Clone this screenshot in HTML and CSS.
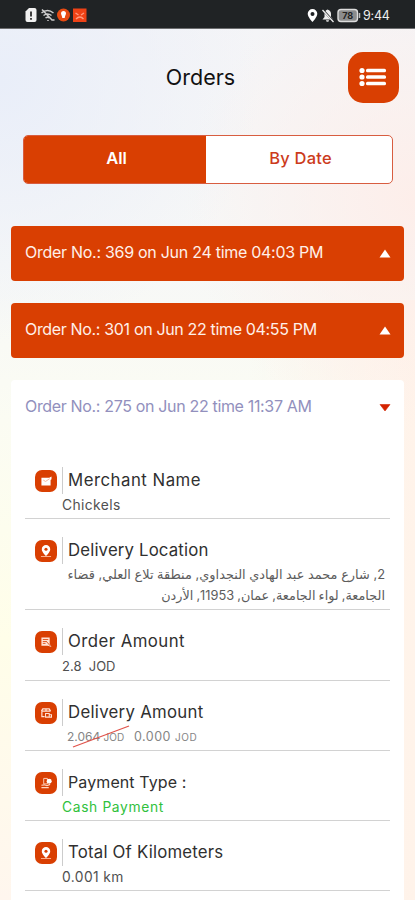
FILE: index.html
```html
<!DOCTYPE html>
<html lang="en">
<head>
<meta charset="utf-8">
<title>Orders</title>
<link rel="stylesheet" href="styles.css">
</head>
<body>
<svg class="defs" aria-hidden="true">
  <symbol id="pin" viewBox="0 0 24 24"><path d="M12 5.500a4.600 4.600 0 0 0-4.600 4.600c0 3.200 4.600 7.400 4.600 7.400s4.600-4.200 4.600-7.400A4.600 4.600 0 0 0 12 5.500z" fill="#fff"/><circle cx="12" cy="10.100" r="1.700" fill="#d93f02"/><path d="M6.500 18h11" stroke="#ffb999" stroke-width="1"/></symbol>
  <symbol id="store" viewBox="0 0 24 24"><path d="M7 8.500h8.500l2.500-1.500v3l-1 1v6H7z" fill="#fff"/><path d="M9 11l2.500 1.500L16 9.500" stroke="#f5b297" fill="none"/></symbol>
  <symbol id="bill" viewBox="0 0 24 24"><path d="M7 7h9v7l2 3.500-4-1.500H7z" fill="#ffe4d8"/><path d="M8.500 9.300h6M8.500 11.500h4M8.500 13.500h3M12 11l5 5.500" stroke="#d93f02" stroke-width=".9"/></symbol>
  <symbol id="parcel" viewBox="0 0 24 24"><path d="M7 10l1.500-2.500h7L17 10M7 10h10M7.500 10v6h3M12 7.500V10" fill="none" stroke="#ffe4d8" stroke-width="1.300"/><path d="M11.500 12.500h4v4h-4zM15.500 14h2.500v2.500h-2.500" fill="none" stroke="#ffe4d8" stroke-width="1.100"/></symbol>
  <symbol id="pay" viewBox="0 0 24 24"><path d="M9.500 7h4v6h-4z" fill="none" stroke="#ffd5c2"/><circle cx="15.500" cy="10" r="2.700" fill="#fff"/><path d="M7 14.500l3-.5 3 1 3.500-1.500M7 17h8" fill="none" stroke="#ffd5c2" stroke-width="1.200"/></symbol>
</svg>
<header class="status">
  <svg class="status-left" viewBox="0 0 64 16">
    <path d="M4 1h5.500a2 2 0 0 1 2 2v10a2 2 0 0 1-2 2H2.500a2 2 0 0 1-2-2V4.500z" fill="#f1f1f1"/><path d="M6 4.500v5M6 11v1.700" stroke="#222" stroke-width="1.700"/>
    <g fill="none" stroke="#ccc" stroke-width="1.500"><path d="M16.500 6q6-5 12 0M18.500 8.500q4-3.200 8 0M20.500 11q2-1.500 4 0M17 2.500l10 10.500M23 13v1M26.500 13h3"/></g>
    <circle cx="38.500" cy="8" r="6.500" fill="#e84b12"/><path d="M38.500 4a2.500 2.500 0 0 0-2.500 2.500c0 1.200 1 2 1.300 4.500h2.400c.3-2.500 1.300-3.300 1.300-4.500A2.500 2.500 0 0 0 38.500 4z" fill="#fff"/>
    <path d="M48 1.500h13.500v13.500H48z" fill="#ee4216"/><path d="M50.500 6l3 2M59 6l-3 2M51 12q4-4 7.500 0" fill="none" stroke="#ff9b80" stroke-width="1.300"/>
  </svg>
  <div class="status-right">
    <svg class="status-icons" viewBox="0 0 56 16">
      <path fill-rule="evenodd" d="M5.500 2A4.800 4.800 0 0 0 .7 6.800C.7 10.200 5.500 15 5.500 15s4.800-4.800 4.800-8.200A4.800 4.800 0 0 0 5.500 2zm0 2.900a2 2 0 1 1 0 4 2 2 0 0 1 0-4z" fill="#fff"/>
      <path d="M20.500 2.500c2.500.5 3.500 2.500 3.500 4.500v3l2 2.500H15.500l2-2.500V7c0-2 1-4 3-4.500zM19 13.200h3a1.500 1.500 0 0 1-3 0z" fill="#eee"/><path d="M15 2l12 13" stroke="#202325" stroke-width="2"/><path d="M15.500 3l11 12" stroke="#eee" stroke-width="1.300"/>
      <rect x="31" y="2.500" width="19.500" height="12" rx="3" fill="#8b8c8d" stroke="#ddd" stroke-width="1.400"/><path d="M52.500 6v5" stroke="#bbb" stroke-width="1.500"/>
      <text x="40.700" y="12.300" text-anchor="middle" class="battery">78</text>
    </svg>
    <span class="clock">9:44</span>
  </div>
</header>
<main>
  <div class="top">
    <h1>Orders</h1>
    <button class="menu" aria-label="Menu"><svg viewBox="0 0 30 22"><g fill="#fff"><circle cx="4" cy="4.500" r="2.600"/><circle cx="4" cy="11" r="2.600"/><circle cx="4" cy="17.500" r="2.600"/><rect x="8" y="2.700" width="20" height="3.500" rx="1.500"/><rect x="8" y="9.200" width="20" height="3.500" rx="1.500"/><rect x="8" y="15.700" width="20" height="3.500" rx="1.500"/></g></svg></button>
  </div>
  <div class="tabs"><div class="tab active">All</div><div class="tab by-date">By Date</div></div>
  <div class="order"><span class="o369">Order No.: 369 on Jun 24 time 04:03 PM</span><svg class="arrow" viewBox="0 0 12 9"><path d="M6 .5L11.500 8.500H.5z" fill="#fff"/></svg></div>
  <div class="order"><span class="o301">Order No.: 301 on Jun 22 time 04:55 PM</span><svg class="arrow" viewBox="0 0 12 9"><path d="M6 .5L11.500 8.500H.5z" fill="#fff"/></svg></div>
  <section class="card">
    <div class="card-head"><span class="o275">Order No.: 275 on Jun 22 time 11:37 AM</span><svg class="arrow" viewBox="0 0 12 9"><path d="M6 8L11 1.500H1z" fill="#d42300" stroke="#d42300" stroke-width=".6" stroke-linejoin="round"/></svg></div>
    <div class="row"><div class="label"><svg class="icon"><use href="#store"/></svg><span class="merchant">Merchant Name</span></div><div class="value ls-s">Chickels</div></div>
    <div class="row tall"><div class="label"><svg class="icon"><use href="#pin"/></svg><span class="location">Delivery Location</span></div><div class="address" dir="rtl" lang="ar"><div class="line-1">2, شارع محمد عبد الهادي النجداوي, منطقة تلاع العلي, قضاء</div><div class="line-2">الجامعة, لواء الجامعة, عمان, 11953, الأردن</div></div></div>
    <div class="row order-sum"><div class="label"><svg class="icon"><use href="#bill"/></svg><span class="amount">Order Amount</span></div><div class="value sum">2.8&nbsp; JOD</div></div>
    <div class="row"><div class="label"><svg class="icon"><use href="#parcel"/></svg><span class="delivery">Delivery Amount</span></div><div class="value fee"><span class="old">2.064 <small>JOD</small><svg class="strike" viewBox="0 0 58 23"><path d="M1 22L57 1" stroke="#e0534b" stroke-width="1.300"/></svg></span><span class="new">0.000 <small>JOD</small></span></div></div>
    <div class="row"><div class="label"><svg class="icon"><use href="#pay"/></svg><span class="payment">Payment Type :</span></div><div class="value cash">Cash Payment</div></div>
    <div class="row"><div class="label"><svg class="icon"><use href="#pin"/></svg><span class="distance">Total Of Kilometers</span></div><div class="value ls-s">0.001 km</div></div>
  </section>
</main>
</body>
</html>
```
FILE: styles.css
```css
* { box-sizing: border-box; }
body {
  margin: 0;
  height: 900px;
  overflow: hidden;
  font-family: Inter, "Liberation Sans", sans-serif;
  color: #303030;
  background:
    radial-gradient(circle at 0 80px, #e9eef9 0, rgba(233, 238, 249, 0) 260px),
    radial-gradient(circle at 415px 200px, #fdeeea 0, rgba(253, 238, 234, 0) 230px),
    linear-gradient(90deg, rgba(255, 243, 234, 0) 60%, #fff3ea 100%) 0 300px / 100% 600px no-repeat,
    linear-gradient(#f4f4f7 0, #f7f8f7 270px, #fbfcf3 420px, #fffee9 640px, #fff6ee 900px);
}
.defs { position: absolute; width: 0; height: 0; }
.status { height: 29px; background: #202325; border-bottom: 1px solid #6c6d6f; display: flex; justify-content: space-between; padding: 7px 23px 0 25px; }
.status-left { width: 64px; height: 16px; }
.status-right { display: flex; }
.status-icons { width: 56px; height: 16px; }
.battery { font-size: 9px; font-weight: 700; fill: #222; }
.clock { width: 29px; font-size: 12.5px; line-height: 17px; letter-spacing: -.2px; color: #eee; }
.top { display: flex; align-items: center; justify-content: center; height: 96px; padding: 0 16px 0 53px; }
h1 { margin: 0 auto; font-size: 21.5px; font-weight: 400; letter-spacing: 0; color: #111; }
.menu { width: 51px; height: 51px; border: 0; border-radius: 15px; background: #d93f02; padding: 0; display: grid; place-items: center; }
.menu svg { width: 30px; height: 22px; }
.tabs { display: flex; height: 49px; margin: 10px 22px 42px 23px; border: 1px solid #d85d40; border-radius: 5px; overflow: hidden; background: #fff; }
.tab { flex: 1; line-height: 44px; text-align: center; font-size: 16.5px; font-weight: 500; color: #cc3b1c; padding-left: 3px; }
.active { flex: 0 0 182px; background: #d93f02; color: #fff; font-weight: 600; }
.by-date { letter-spacing: .2px; }
.order { height: 55px; margin: 0 11px 22px 11px; border-radius: 4px; background: #d93f02; color: #fff0e9; }
.order, .card-head { display: flex; align-items: center; justify-content: space-between; padding: 0 13px 4px 14px; font-size: 16px; white-space: nowrap; }
.arrow { width: 12px; height: 9px; margin-top: 3px; }
.o369 { letter-spacing: -.28px; }
.o301 { letter-spacing: -.34px; }
.o275 { letter-spacing: -.34px; }
.card { margin: 0 11px; height: 540px; background: #fff; border-radius: 4px 4px 0 0; }
.card-head { height: 69px; padding-bottom: 17px; color: #9290bd; }
.row { height: 70px; margin: 0 14px; padding: 18px 0 0 10px; border-bottom: 1px solid #d2d2d2; }
.tall { height: 91px; }
.order-sum { height: 71px; }
.label { display: flex; align-items: center; height: 27px; font-size: 16.8px; white-space: nowrap; }
.icon { width: 22px; height: 22px; border-radius: 7px; background: #d93f02; }
.label span { margin-left: 5px; padding-left: 5px; height: 27px; line-height: 27px; border-left: 1px solid #ccc; }
.merchant { letter-spacing: .5px; }
.location { letter-spacing: .15px; }
.amount { letter-spacing: .45px; }
.delivery { letter-spacing: .28px; }
.label .payment { font-size: 16px; letter-spacing: .1px; }
.distance { letter-spacing: .2px; }
.value { margin: 2px 0 0 27px; font-size: 13.8px; line-height: 18px; color: #505050; white-space: nowrap; }
.ls-s { letter-spacing: .4px; }
.sum { font-size: 13px; letter-spacing: 0; }
.cash { letter-spacing: .65px; color: #2fc13c; }
.address { margin-right: 5px; font-family: Inter, "DejaVu Sans", sans-serif; line-height: 21px; color: #5c5c5c; white-space: nowrap; }
.line-1 { font-size: 12.9px; }
.line-2 { font-size: 12.8px; word-spacing: -.5px; }
.fee { display: flex; padding-left: 5px; font-size: 12px; color: #858585; }
.fee small { font-size: 10px; }
.old { position: relative; width: 67px; }
.new { font-size: 12.5px; letter-spacing: .5px; }
.strike { position: absolute; left: 5px; top: -3px; width: 58px; height: 23px; }
```
